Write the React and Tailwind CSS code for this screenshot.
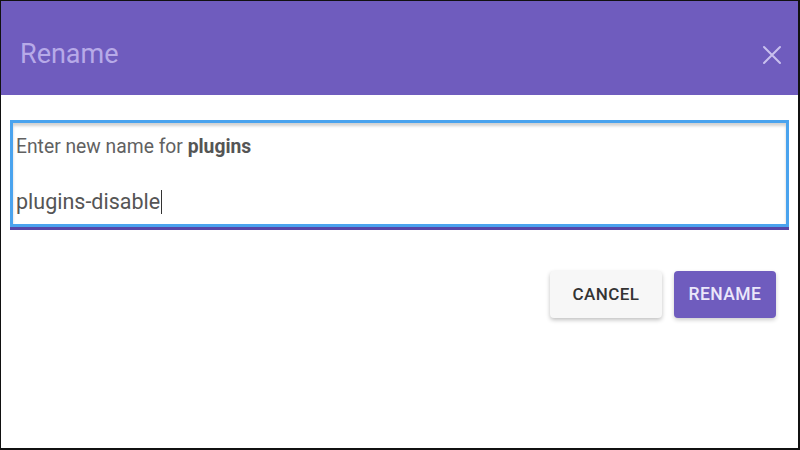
import React, { useState } from 'react';

const CloseIcon = () => (
  <svg width="20" height="20" viewBox="0 0 20 20" fill="none" stroke="#c9c0ee" strokeWidth="2" strokeLinecap="round">
    <path d="M2 2 L18 18 M18 2 L2 18" />
  </svg>
);

const RenameDialog = () => {
  const [name] = useState('plugins-disable');

  return (
    <div className="w-[800px] h-[450px] overflow-hidden bg-white border-l border-t border-r-2 border-b-2 border-[#111] flex flex-col font-['Roboto','Liberation_Sans',sans-serif]">
      {/* header */}
      <div className="h-[94px] shrink-0 bg-[#6f5cbe] flex items-center justify-between pl-[19px] pr-[16px]">
        <h1 className="text-[27px] leading-none text-[#b7aae8] font-normal mt-[12px]">Rename</h1>
        <div className="mt-[14px]"><CloseIcon /></div>
      </div>

      {/* body */}
      <div className="px-[9px] pt-[25px]">
        <div className="h-[107px] border-[3px] border-[#4aa3ee] shadow-[inset_0_3px_3px_rgba(0,0,0,0.18)] relative flex flex-col px-[3px]">
          <p className="text-[19.3px] text-[#616161] mt-[14px] leading-5">
            Enter new name for <span className="font-bold text-[#555]">plugins</span>
          </p>
          <div className="mt-[33px] flex items-center text-[21.5px] leading-6 text-[#555]">
            <span>{name}</span>
            <span className="w-px h-[24px] bg-[#333] ml-px" />
          </div>
          <div className="absolute left-[-3px] right-[-3px] bottom-[-6px] h-[3px] bg-[#5647a8]" />
        </div>

        <div className="flex justify-end gap-[12px] mt-[44px] pr-[13px]">
          <button className="w-[112px] h-[47px] rounded bg-[#f7f7f7] text-[#333] text-[17px] font-medium tracking-wide shadow-[0_2px_4px_rgba(0,0,0,0.25)]">
            CANCEL
          </button>
          <button className="w-[102px] h-[47px] rounded bg-[#6f5cbe] text-[#ebe7fa] text-[17.5px] font-medium tracking-wide shadow-[0_2px_4px_rgba(0,0,0,0.2)]">
            RENAME
          </button>
        </div>
      </div>
    </div>
  );
};

export default function App() {
  return <RenameDialog />;
}
